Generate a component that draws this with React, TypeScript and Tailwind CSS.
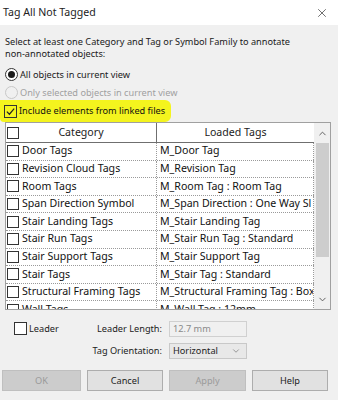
import { X, ChevronUp, ChevronDown } from 'lucide-react'

const rows = [
  ['Door Tags', 'M_Door Tag'],
  ['Revision Cloud Tags', 'M_Revision Tag'],
  ['Room Tags', 'M_Room Tag : Room Tag'],
  ['Span Direction Symbol', 'M_Span Direction : One Way Sl'],
  ['Stair Landing Tags', 'M_Stair Landing Tag'],
  ['Stair Run Tags', 'M_Stair Run Tag : Standard'],
  ['Stair Support Tags', 'M_Stair Support Tag'],
  ['Stair Tags', 'M_Stair Tag : Standard'],
  ['Structural Framing Tags', 'M_Structural Framing Tag : Box'],
  ['Wall Tags', 'M_Wall Tag : 12mm'],
]

function Box({ className = '' }: { className?: string }) {
  return <span className={`inline-block w-[12px] h-[12px] bg-white border border-[#333] shrink-0 ${className}`} />
}

export default function App() {
  return (
    <div className="w-[338px] h-[400px] bg-[#f0f0f0] flex flex-col text-[9.2px] text-[#1a1a1a] overflow-hidden"
      style={{ fontFamily: '"Noto Sans", "Open Sans", sans-serif' }}>
      {/* title bar */}
      <div className="h-[25px] bg-white flex items-center justify-between pl-[3px] pr-[9px] shrink-0">
        <span className="text-[10.6px] text-[#222]">Tag All Not Tagged</span>
        <X className="w-[14px] h-[14px] text-[#333]" strokeWidth={1.2} />
      </div>

      <div className="px-[5px] pt-[11px]">
        <p className="leading-[11.5px]">Select at least one Category and Tag or Symbol Family to annotate<br />non-annotated objects:</p>

        <div className="flex items-center gap-[2px] mt-[9px] h-[13px]">
          <span className="w-[13px] h-[13px] rounded-full border border-[#333] bg-white flex items-center justify-center">
            <span className="w-[7px] h-[7px] rounded-full bg-[#1a1a1a]" />
          </span>
          <span>All objects in current view</span>
        </div>
        <div className="flex items-center gap-[2px] mt-[5px] h-[13px] text-[#a0a0a0]">
          <span className="w-[13px] h-[13px] rounded-full border border-[#c8c8c8] bg-[#f0f0f0]" />
          <span>Only selected objects in current view</span>
        </div>
      </div>

      <div className="mt-[1px] w-[171px] h-[22px] bg-[#f4f41e] rounded-r-[6px] rounded-bl-[4px] flex items-center pl-[4px] gap-[2px] shrink-0">
        <span className="w-[13px] h-[13px] border border-[#333] flex items-center justify-center">
          <svg viewBox="0 0 12 12" className="w-[11px] h-[11px]"><path d="M2 6.2 L4.8 9 L10 2.8" fill="none" stroke="#222" strokeWidth="1.3" /></svg>
        </span>
        <span className="text-[#111] whitespace-nowrap">Include elements from linked files</span>
      </div>

      {/* table */}
      <div className="ml-[5px] w-[326px] h-[188px] border border-[#a0a0a0] bg-white flex overflow-hidden shrink-0">
        <div className="w-[308px] flex flex-col">
          <div className="flex h-[20px] border-b border-[#6f6f6f] shrink-0">
            <div className="w-[151px] flex items-center border-r border-[#6f6f6f] relative">
              <Box className="absolute left-[1px]" />
              <span className="flex-1 text-center text-[10.6px] text-[#222]">Category</span>
            </div>
            <div className="flex-1 flex items-center justify-center text-[10.6px] text-[#222]">Loaded Tags</div>
          </div>
          {rows.map(([c, t]) => (
            <div key={c} className="flex h-[17.6px] border-b border-dotted border-[#9a9a9a] shrink-0">
              <div className="w-[151px] flex items-center border-r border-dotted border-[#9a9a9a]">
                <Box className="ml-[1px]" />
                <span className="ml-[3px] whitespace-nowrap text-[10.6px] text-[#111]">{c}</span>
              </div>
              <div className="flex-1 flex items-center pl-[3px] whitespace-nowrap overflow-hidden text-[10.6px] text-[#111] border-r border-dotted border-[#9a9a9a]">{t}</div>
            </div>
          ))}
        </div>
        <div className="flex-1 bg-[#f0f0f0] flex flex-col items-center">
          <div className="h-[20px] flex items-center"><ChevronUp className="w-[11px] h-[11px] text-[#555]" strokeWidth={2} /></div>
          <div className="w-[13px] h-[114px] bg-[#cdcdcd]" />
          <div className="flex-1" />
          <div className="h-[20px] flex items-center"><ChevronDown className="w-[11px] h-[11px] text-[#555]" strokeWidth={2} /></div>
        </div>
      </div>

      {/* leader settings */}
      <div className="flex mt-[11px] h-[16px] items-center shrink-0">
        <div className="w-[162px] flex items-center">
          <Box className="ml-[14px] w-[13px] h-[13px]" />
          <span className="ml-[2px] text-[#222]">Leader</span>
          <span className="ml-auto text-[#222]">Leader Length:</span>
        </div>
        <div className="ml-[7px] w-[78px] h-[16px] border border-[#d0d0d0] bg-[#f0f0f0] flex items-center pl-[3px] text-[#8a8a8a]">12.7 mm</div>
      </div>
      <div className="flex mt-[6px] h-[16px] items-center shrink-0">
        <div className="w-[162px] text-right text-[#222]">Tag Orientation:</div>
        <div className="ml-[7px] w-[78px] h-[16px] border border-[#c8c8c8] bg-[#e8e8e8] flex items-center justify-between pl-[3px] pr-[5px] text-[#222]">
          <span>Horizontal</span>
          <ChevronDown className="w-[10px] h-[10px] text-[#666]" strokeWidth={1.5} />
        </div>
      </div>

      {/* buttons */}
      <div className="flex gap-[6px] ml-[2px] mt-[11px] shrink-0">
        <div className="w-[79px] h-[21px] bg-[#cccccc] border border-[#bfbfbf] flex items-center justify-center text-[#9a9a9a]">OK</div>
        <div className="w-[76px] h-[21px] bg-[#e1e1e1] border border-[#adadad] flex items-center justify-center text-[#222]">Cancel</div>
        <div className="w-[77px] h-[21px] bg-[#cccccc] border border-[#bfbfbf] flex items-center justify-center text-[#9a9a9a]">Apply</div>
        <div className="w-[76px] h-[21px] bg-[#e1e1e1] border border-[#adadad] flex items-center justify-center text-[#222]">Help</div>
      </div>
    </div>
  )
}
